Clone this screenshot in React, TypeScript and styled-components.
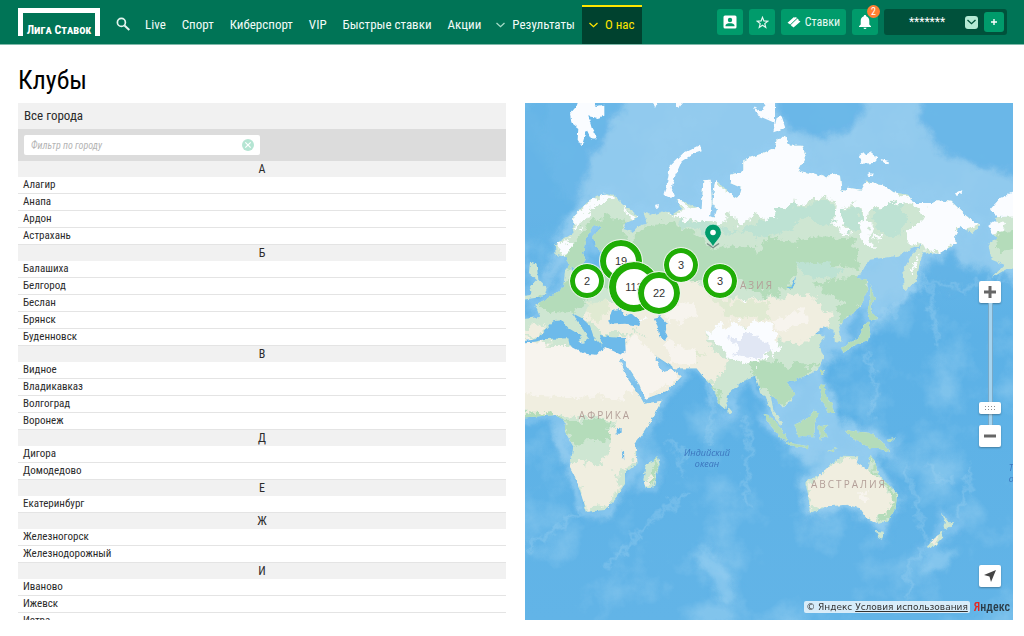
import React, { useState } from "react";
import styled, { createGlobalStyle, css } from "styled-components";

const GlobalStyle = createGlobalStyle`
  *, *::before, *::after { box-sizing: border-box; }
  body {
    margin: 0;
    background: #fff;
    color: #2b2b2b;
    font-family: "Roboto Condensed", "Liberation Sans Narrow", Roboto, sans-serif;
    font-size: 13px;
  }
  button, input { font-family: inherit; }
  button { cursor: pointer; }
`;

const Page = styled.div`
  height: 100vh;
  display: flex;
  flex-direction: column;
`;

/* ---------- header ---------- */

const Header = styled.header`
  flex: none;
  height: 45px;
  display: flex;
  align-items: stretch;
  padding: 0 17px 0 18px;
  background: #007456;
  border-bottom: 1px solid #7fb9aa;
`;

const LogoLink = styled.a`
  align-self: center;
  height: 28px;
  margin-right: 14px;
  svg { display: block; }
`;

const SearchButton = styled.button`
  width: 18px;
  padding: 4px 0 0;
  margin-right: 5px;
  border: 0;
  background: none;
  color: #e6f6f0;
  svg { display: block; margin: auto; }
`;

const Nav = styled.nav`
  display: flex;
  flex: 1;
  align-items: stretch;
`;

const NavLink = styled.a<{ $active?: boolean; $menu?: boolean }>`
  display: flex;
  align-items: center;
  gap: 7px;
  margin-top: 5px;
  padding: 0 ${(p) => (p.$menu ? 7 : 8)}px 2px;
  border-top: 2px solid transparent;
  color: #f2fbf8;
  font-size: 13px;
  font-weight: 400;
  line-height: 16px;
  white-space: nowrap;
  text-decoration: none;
  svg { color: #a5dcc8; }
  ${(p) =>
    p.$active &&
    css`
      background: #00422f;
      border-top-color: #ffe600;
      color: #ffe600;
      svg { color: #ffe600; }
    `}
`;

const Tools = styled.div`
  display: flex;
  align-items: flex-start;
  gap: 6px;
  padding-top: 9px;
`;

const Tool = styled.button<{ $wide?: boolean }>`
  position: relative;
  display: flex;
  align-items: center;
  justify-content: center;
  gap: 4px;
  width: ${(p) => (p.$wide ? 65 : 26)}px;
  height: 26px;
  padding: 0;
  border: 0;
  border-radius: 3px;
  background: #009b6b;
  color: #e8f8f2;
  font-size: 12px;
`;

const Badge = styled.span`
  position: absolute;
  top: -4px;
  right: -2px;
  width: 13px;
  height: 13px;
  border-radius: 50%;
  background: #ff7f32;
  color: #fff;
  font-size: 10px;
  line-height: 13px;
  text-align: center;
`;

const Balance = styled.div`
  display: flex;
  align-items: center;
  gap: 6px;
  width: 123px;
  height: 26px;
  padding: 3px;
  border-radius: 3px;
  background: #00513b;
  color: #fff;
`;

const Amount = styled.span`
  flex: 1;
  padding-left: 8px;
  font-size: 12px;
  line-height: 16px;
  text-align: center;
`;

const MiniButton = styled.button<{ $light?: boolean }>`
  display: flex;
  align-items: center;
  justify-content: center;
  width: ${(p) => (p.$light ? 13 : 20)}px;
  height: ${(p) => (p.$light ? 13 : 20)}px;
  padding: 0;
  border: 0;
  border-radius: 3px;
  background: ${(p) => (p.$light ? "#b5ead5" : "#009b6b")};
  color: ${(p) => (p.$light ? "#00513b" : "#fff")};
`;

/* ---------- city list ---------- */

const Main = styled.main`
  flex: 1;
  min-height: 0;
  display: flex;
  flex-direction: column;
  padding: 20px 11px 16px 18px;
`;

const Title = styled.h1`
  margin: 0 0 8px;
  color: #000;
  font-size: 26px;
  line-height: 30px;
  font-weight: 400;
`;

const Columns = styled.div`
  flex: 1;
  min-height: 0;
  display: grid;
  grid-template-columns: 1fr 1fr;
  gap: 19px;
`;

const Cities = styled.section`
  min-height: 0;
  overflow-y: auto;
  scrollbar-width: none;
`;

const CitiesTitle = styled.h2`
  margin: 0;
  padding: 0 6px;
  background: #f1f1f1;
  font-size: 13px;
  line-height: 26px;
  font-weight: 400;
`;

const Filter = styled.form`
  padding: 6px;
  background: #dcdcdc;
`;

const FilterField = styled.div`
  display: flex;
  align-items: center;
  width: 236px;
  height: 20px;
  padding: 0 6px 0 7px;
  border-radius: 2px;
  background: #fff;
`;

const FilterInput = styled.input`
  flex: 1;
  min-width: 0;
  padding: 0;
  border: 0;
  outline: 0;
  background: none;
  font-size: 10px;
  color: #2b2b2b;
  &::placeholder { color: #b4b4b4; font-style: italic; }
`;

const ClearButton = styled.button`
  padding: 0;
  border: 0;
  background: none;
  svg { display: block; }
`;

const Letter = styled.h3`
  margin: 0;
  background: #f1f1f1;
  font-size: 12px;
  line-height: 16px;
  font-weight: 400;
  text-align: center;
`;

const CityList = styled.ul`
  margin: 0;
  padding: 0;
  list-style: none;
`;

const City = styled.li`
  padding: 0 5px;
  border-bottom: 1px solid #e4e4e4;
  font-size: 11px;
  line-height: 16px;
  a { color: inherit; text-decoration: none; }
`;

/* ---------- map ---------- */

const MapBox = styled.section`
  position: relative;
  min-height: 0;
  overflow: hidden;
  background: #62b3e6;
`;

const Terrain = styled.svg`
  display: block;
  width: 100%;
  height: 100%;
`;

const Place = styled.span<{ $x: number; $y: number }>`
  position: absolute;
  left: ${(p) => (p.$x / 488) * 100}%;
  top: ${(p) => (p.$y / 517) * 100}%;
  transform: translate(-50%, -50%);
`;

const Continent = styled(Place)`
  color: #b39f98;
  font: 10px/12px "Open Sans", sans-serif;
  letter-spacing: 2px;
`;

const Ocean = styled(Place)`
  color: #3b74bd;
  font: italic 9px/11px "Open Sans", sans-serif;
  text-align: center;
  white-space: nowrap;
`;

const Cluster = styled.button<{ $size: number }>`
  display: block;
  width: ${(p) => p.$size}px;
  height: ${(p) => p.$size}px;
  padding: 0;
  border: ${(p) => (p.$size > 45 ? 7 : p.$size > 40 ? 6 : 5)}px solid #1fad05;
  border-radius: 50%;
  outline: 1px solid #e9f5e6;
  background: #fff;
  color: #333;
  font: 11px/12px "Liberation Sans", sans-serif;
`;

const ZoomControl = styled.div`
  position: absolute;
  top: 178px;
  right: 12px;
  display: flex;
  flex-direction: column;
  align-items: center;
`;

const MapButton = styled.button`
  display: flex;
  align-items: center;
  justify-content: center;
  width: 22px;
  height: 22px;
  padding: 0;
  border: 0;
  border-radius: 2px;
  background: #fff;
  box-shadow: 0 1px 2px rgba(0, 0, 0, 0.3);
  color: #666;
`;

const gripDots = [6, 9, 12, 15]
  .flatMap((x) => [4, 7].map((y) => `linear-gradient(#8c8c8c, #8c8c8c) ${x}px ${y}px / 1px 1px no-repeat`))
  .join(", ");

const ZoomRange = styled.input`
  appearance: none;
  writing-mode: vertical-lr;
  direction: rtl;
  width: 22px;
  height: 122px;
  margin: 0;
  background: linear-gradient(90deg, transparent 9px, #7aa9c6 9px, #7aa9c6 10px, #a5d4f0 10px, #a5d4f0 13px, #7aa9c6 13px, #7aa9c6 14px, transparent 14px);
  &::-webkit-slider-thumb {
    appearance: none;
    width: 22px;
    height: 12px;
    border-radius: 2px;
    background: ${gripDots}, #fff;
    box-shadow: 0 1px 2px rgba(0, 0, 0, 0.3);
  }
`;

const Locate = styled(MapButton)`
  position: absolute;
  right: 12px;
  bottom: 33px;
`;

const Credits = styled.div`
  position: absolute;
  right: 3px;
  bottom: 7px;
  display: flex;
  align-items: center;
  gap: 4px;
`;

const Copyright = styled.span`
  padding: 0 2px;
  border-radius: 2px;
  background: rgba(255, 255, 255, 0.75);
  color: #333;
  font: 9px/12px "DejaVu Sans", sans-serif;
  a { color: inherit; }
`;

const YandexLink = styled.a`
  color: #2b3c48;
  font: 500 12px/12px "Roboto Condensed", "Liberation Sans Narrow", sans-serif;
  text-decoration: none;
  span { color: #e52620; }
`;

const LogoText = styled.text`
  fill: #fff;
  font: small-caps 700 12px "Roboto Condensed", "Liberation Sans Narrow", sans-serif;
`;

const Chevron = () => (
  <svg width="9" height="6" viewBox="0 0 9 6" fill="none" stroke="currentColor" strokeWidth="1.3" aria-hidden="true">
    <path d="M.5 1 4.500 4.700 8.500 1" />
  </svg>
);

const Logo = () => (
  <svg width="82" height="28" viewBox="0 0 82 28" aria-hidden="true">
    <path d="M0 28V0H82V28H77V5H5V28Z" fill="#fff" />
    <LogoText x="41" y="26" textAnchor="middle">
      Лига Ставок
    </LogoText>
  </svg>
);

const groups = [
  { letter: "А", cities: ["Алагир", "Анапа", "Ардон", "Астрахань"] },
  { letter: "Б", cities: ["Балашиха", "Белгород", "Беслан", "Брянск", "Буденновск"] },
  { letter: "В", cities: ["Видное", "Владикавказ", "Волгоград", "Воронеж"] },
  { letter: "Д", cities: ["Дигора", "Домодедово"] },
  { letter: "Е", cities: ["Екатеринбург"] },
  { letter: "Ж", cities: ["Железногорск", "Железнодорожный"] },
  { letter: "И", cities: ["Иваново", "Ижевск", "Истра"] },
];

const links = ["Live", "Спорт", "Киберспорт", "VIP", "Быстрые ставки", "Акции"];

const clusters = [
  { x: 96, y: 158, size: 42, label: "19" },
  { x: 62, y: 178, size: 34, label: "2" },
  { x: 109, y: 184, size: 50, label: "113" },
  { x: 134, y: 190, size: 42, label: "22" },
  { x: 156, y: 162, size: 34, label: "3" },
  { x: 195, y: 178, size: 34, label: "3" },
];

/* Coastlines, three drawing units to one map pixel. */
const mainland =
  "M215 278 240 272 270 280 300 308 340 338 325 350 300 362 296 378 325 388 345 366 365 363 356 328 385 335 425 322 440 335 468 318 455 288 500 305 530 320 535 232 557 230 560 300 555 340 568 345 576 320 562 300 570 235 590 245 605 262 628 285 645 275 650 255 615 240 615 215 655 205 655 172 715 150 750 135 755 110 780 98 795 128 830 128 842 160 820 205 870 212 905 226 920 210 945 218 950 270 968 254 1010 260 1025 232 1085 252 1105 268 1150 275 1165 300 1220 300 1235 292 1280 296 1325 340 1365 365 1340 393 1305 368 1290 395 1292 422 1240 452 1195 448 1182 490 1175 535 1138 565 1132 505 1165 450 1190 425 1155 440 1120 458 1035 470 997 525 1025 530 1030 560 1000 620 950 655 940 680 950 712 930 720 925 680 895 670 870 690 900 698 883 725 895 760 885 790 860 811 810 831 785 836 811 876 775 916 755 891 738 880 745 921 775 961 765 968 735 920 722 880 705 871 700 846 690 821 650 836 612 871 600 919 585 906 560 846 535 821 515 796 450 796 430 783 395 760 390 770 415 808 440 800 470 820 430 862 360 888 340 840 290 765 283 770 310 830 340 872 358 903 410 893 370 966 330 1021 338 1081 300 1111 300 1146 275 1181 240 1221 185 1226 155 1131 135 1091 145 1031 120 986 118 951 90 936 -40 946 -40 652 45 642 30 605 60 590 90 572 115 550 120 505 138 482 143 525 200 532 225 505 235 465 290 448 235 452 210 430 205 400 230 372 205 366 182 408 174 450 182 470 158 505 130 482 122 462 92 455 90 425 145 390 145 340 185 300Z";

const waters = [
  "M-40 720 35 708 62 680 85 655 112 652 130 675 155 690 172 705 160 720 178 722 185 695 150 645 145 632 170 645 195 668 207 705 230 728 225 695 250 702 300 705 302 745 288 755 240 732 215 755 180 752 135 728 130 706 60 708 30 716Z",
  "M250 650 262 620 290 618 300 640 320 632 345 655 340 668 300 662 255 665Z",
  "M385 645 405 640 425 660 418 685 428 700 420 710 402 700 398 670Z",
  "M785 555 800 550 812 520 810 545 795 560Z",
  "M275 976 290 974 290 992 275 992Z",
  "M290 1043 297 1046 298 1072 293 1065Z",
];

const islands = [
  "M-40 585 20 575 15 550 35 530 12 510 15 478 35 485 40 530 65 555 60 575 30 585 -40 595Z",
  "M114 665 124 665 122 690 114 690Z M150 708 178 705 170 720Z",
  "M608 910 622 926 612 934Z",
  "M398 1060 404 1080 385 1155 362 1155 355 1130 362 1085 385 1075Z",
  "M1035 545 1045 575 1052 590 1040 600 1040 630 1060 645 1035 650 1028 625 1036 580Z",
  "M1030 655 1035 680 1028 715 990 725 955 750 950 735 1000 705 1015 670Z",
  "M735 940 775 985 790 1015 770 1010 735 965 715 935Z M785 1018 850 1030 850 1036 790 1026Z",
  "M808 965 850 945 868 920 880 935 870 960 868 1000 820 1000Z",
  "M885 800 900 802 895 815 890 812Z M885 845 900 845 900 880 918 900 930 930 910 930 890 890Z",
  "M880 970 910 965 895 980 910 1005 895 1000 888 1015Z M905 1045 935 1035 925 1045Z",
  "M960 980 985 985 1040 990 1070 1015 1095 1048 1060 1035 1035 1035 1000 1015 975 1000Z M1085 1010 1110 1005 1090 1022Z",
  "M1037 1055 1050 1075 1060 1115 1095 1150 1117 1170 1112 1215 1090 1255 1060 1262 1030 1250 1005 1215 965 1205 905 1210 855 1230 850 1180 840 1135 880 1120 915 1085 950 1058 1000 1060 995 1080 1025 1100Z",
  "M1053 1284 1080 1286 1070 1310 1060 1305Z",
  "M1250 1228 1270 1258 1288 1258 1265 1280 1255 1275 1260 1255Z M1255 1285 1250 1305 1220 1338 1205 1332 1235 1300Z",
  "M1410 345 1445 340 1504 330 1504 490 1440 500 1400 525 1438 485 1400 470 1390 425 1415 405 1400 385 1420 370Z",
];

const snowIslands = [
  "M135 32 150 15 165 -30 195 -30 215 12 238 8 238 38 218 45 190 40 200 75 218 108 200 110 185 80 170 130 158 110 160 75 140 60Z",
  "M415 275 425 245 435 190 475 150 525 125 530 145 500 155 470 175 448 225 440 255 450 280 430 282Z",
  "M375 -20 405 -20 390 12Z M440 -20 485 -20 460 15Z M685 10 710 25 730 -20 750 -10 750 60 700 38Z",
  "M735 15 748 28 745 55 732 50Z M755 45 770 40 782 75 745 88Z",
  "M1002 160 1015 148 1022 155 1035 148 1058 165 1045 180 1010 182Z M1067 168 1095 175 1090 184 1072 178Z M1028 210 1045 212 1045 220 1028 218Z M1290 268 1312 262 1310 270 1295 276Z",
  "M390 310 402 306 400 316 392 318Z",
  "M1390 365 1405 355 1440 360 1432 385 1400 392Z M1395 320 1425 285 1504 250 1504 340 1420 342Z",
];

const snow = [
  "M95 430 145 410 145 430 110 460 95 450Z M145 340 185 300 240 270 270 282 240 295 215 300 190 330 165 370 150 385Z M295 308 338 338 325 348 300 325Z",
  "M430 335 470 320 455 285 530 320 530 225 560 225 620 280 610 210 750 90 860 90 860 200 960 200 970 240 1090 240 1170 290 1280 285 1380 370 1300 380 1295 425 1235 455 1190 430 1140 420 1150 375 1200 350 1190 310 1120 300 1050 310 1020 345 1040 390 1080 405 1070 415 1030 385 1050 435 1020 430 1005 365 1010 330 990 295 960 320 950 370 985 400 960 395 925 350 930 290 860 290 790 310 730 350 690 335 650 365 620 335 585 355 550 365 500 350 480 345Z",
  "M540 680 580 675 620 655 660 670 690 650 740 665 760 720 755 770 735 745 690 790 630 775 590 735 550 710Z",
  "M1155 500 1195 448 1185 465 1160 515Z M650 590 665 588 660 600Z M340 645 360 650 350 655Z",
];

const sea = {
  pale: [
    "M70 -60 1524 -60 1524 560 1230 440 1180 560 1010 600 900 440 330 380 230 380 150 400 90 520 40 580 90 440 150 320 90 240 60 120Z",
    "M1130 550 1190 470 1170 560 1080 650 1040 680 1020 640 880 820 860 820 880 700 1000 530 1120 450Z",
    "M740 870 900 800 930 890 940 960 1050 980 1110 1040 1050 1060 1000 1060 850 1080 730 960Z",
    "M80 945 130 980 160 1150 190 1250 245 1225 310 1150 345 1070 340 1010 330 1080 300 1180 240 1250 190 1245 150 1170 130 1100Z",
    "M820 1140 930 1050 1040 1040 1130 1180 1090 1290 1050 1280 970 1220 850 1250Z",
  ],
  deep: [
    "M-60 60 60 -60 330 -60 240 90 190 200 180 270 100 360 -60 450Z",
    "M735 -60 1040 -60 1000 45 960 90 900 105 830 100 770 60Z M1180 -60 1524 -60 1524 240 1390 195 1290 170 1200 100Z",
    "M1200 460 1290 440 1330 520 1420 550 1280 570 1210 530Z M960 665 1020 590 1030 650 990 700Z",
  ],
};

const forests = [
  "M110 470 180 370 240 340 290 350 310 420 360 370 440 360 520 400 560 440 620 430 700 440 730 400 800 420 870 400 980 410 1010 500 900 480 820 500 790 560 720 580 650 540 560 520 420 540 330 530 230 560 150 630 60 620 30 590 80 560 160 520Z",
  "M870 540 960 520 1010 525 1030 560 1000 620 950 655 930 650 960 600 900 570Z",
  "M660 770 750 780 830 790 890 780 860 811 810 831 811 876 775 916 738 880 690 820Z",
  "M118 951 250 950 262 1000 250 1010 150 1020 120 986Z M-60 925 90 930 118 951 -60 960Z",
  "M1037 1055 1060 1115 1117 1170 1112 1215 1090 1255 1060 1262 1080 1200 1100 1170 1040 1100Z",
  "M560 830 600 919 590 910 555 845Z M404 1060 385 1155 375 1155 385 1080Z M1400 400 1504 370 1504 440 1430 450Z",
];

const teal = [
  "M470 345 560 370 650 380 740 340 800 310 920 300 925 355 890 370 860 340 820 350 800 380 740 400 700 400 620 385 540 390 470 370Z",
  "M965 320 1000 300 1005 370 970 390 952 350Z M1060 310 1130 300 1150 350 1120 400 1060 390 1040 350Z M1230 390 1245 380 1240 435 1200 440Z",
  "M820 480 900 475 950 500 930 525 840 520Z M480 670 540 730 500 745 460 700Z M150 340 200 310 170 360Z",
];

const steppe = [
  "M330 560 380 530 510 525 550 560 640 590 740 580 870 580 890 620 920 630 900 680 820 720 760 715 700 660 540 680 550 740 620 770 560 850 530 830 450 800 360 690 230 690 170 640Z",
  "M-60 705 220 735 340 690 540 750 515 800 470 850 410 900 340 1060 300 1110 230 1100 270 950 -60 920Z",
  "M130 1080 180 1080 260 1090 280 1120 270 1190 190 1230Z",
  "M850 1140 930 1080 1000 1065 1040 1100 1080 1160 1100 1190 1080 1240 1030 1250 960 1205 855 1220Z M355 1120 380 1115 375 1152 355 1155Z",
  "M1250 1290 1235 1310 1215 1330 1225 1305Z M10 670 60 660 50 700 -60 705Z",
];

const grassland = [
  "M560 585 640 600 720 590 740 620 735 650 690 640 640 650 600 640Z",
  "M190 600 250 590 250 650 190 650Z M470 740 540 745 520 770 480 765Z",
];

const sand = [
  "M-60 720 130 720 240 735 340 700 400 770 470 820 350 888 330 850 300 890 -60 870Z",
  "M380 610 500 600 520 640 440 660Z M740 650 840 620 850 660 760 690Z",
  "M420 710 520 750 500 790 440 780Z M1000 1165 1030 1175 1020 1195 1000 1185Z",
];

const ridges = [
  "M1195 520Q1300 590 1440 520",
  "M1040 660Q1130 610 1180 550",
  "M550 830Q570 930 550 1020",
  "M670 940 665 1210",
  "M420 1010Q500 1040 465 1120",
  "M0 1340Q90 1280 170 1220",
  "M240 1400Q330 1280 490 1170",
  "M1150 1100 1180 1230 1210 1330",
  "M1210 1075Q1240 1180 1290 1110",
  "M1330 1080Q1350 1150 1290 1240",
  "M1150 1480Q1130 1390 1200 1330",
  "M1020 750Q1080 850 1030 940",
  "M1210 540 1240 730",
];

function WorldMap() {
  const paths = (list: string[], fill: string, opacity = 1) =>
    list.map((d) => <path key={d} d={d} fill={fill} opacity={opacity} />);
  return (
    <Terrain viewBox="0 0 1464 1551" preserveAspectRatio="xMidYMid slice" aria-hidden="true">
      <defs>
        <filter id="coast" x="-5%" y="-5%" width="110%" height="110%">
          <feTurbulence type="fractalNoise" baseFrequency="0.07" numOctaves="3" seed="4" />
          <feDisplacementMap in="SourceGraphic" scale="12" xChannelSelector="R" yChannelSelector="G" />
        </filter>
        <filter id="biome" x="-5%" y="-5%" width="110%" height="110%">
          <feTurbulence type="fractalNoise" baseFrequency="0.035" numOctaves="4" seed="9" />
          <feDisplacementMap in="SourceGraphic" scale="50" xChannelSelector="R" yChannelSelector="G" />
        </filter>
        <filter id="shelf" x="-10%" y="-10%" width="120%" height="120%">
          <feGaussianBlur in="SourceGraphic" stdDeviation="9" result="soft" />
          <feTurbulence type="fractalNoise" baseFrequency="0.015" numOctaves="4" seed="2" />
          <feDisplacementMap in="soft" scale="60" xChannelSelector="R" yChannelSelector="G" />
        </filter>
        <filter id="ridge" filterUnits="userSpaceOnUse" x="0" y="0" width="1464" height="1551">
          <feGaussianBlur in="SourceGraphic" stdDeviation="4" result="soft" />
          <feTurbulence type="fractalNoise" baseFrequency="0.03" numOctaves="4" seed="7" />
          <feDisplacementMap in="soft" scale="60" xChannelSelector="R" yChannelSelector="G" />
        </filter>
        <filter id="seabed" filterUnits="userSpaceOnUse" x="0" y="0" width="1464" height="1551">
          <feTurbulence type="fractalNoise" baseFrequency="0.006" numOctaves="6" seed="12" />
          <feColorMatrix values="0 0 0 0 0.6  0 0 0 0 0.82  0 0 0 0 0.95  3 0 0 0 -1.45" />
        </filter>
        <linearGradient id="water" x1="0" y1="0" x2="0" y2="1">
          <stop offset="0" stopColor="#74bce9" />
          <stop offset="0.45" stopColor="#5cb1e6" />
          <stop offset="1" stopColor="#62b4e7" />
        </linearGradient>
        <clipPath id="land">
          <path d={mainland} />
          {islands.map((d) => (
            <path key={d} d={d} />
          ))}
        </clipPath>
      </defs>
      <rect width="1464" height="1551" fill="url(#water)" />
      <rect width="1464" height="1551" filter="url(#seabed)" opacity="0.3" />
      <g filter="url(#shelf)">
        {paths(sea.pale, "#97ccef", 0.85)}
        {paths(sea.deep, "#62b3e6", 0.8)}
        <path d={mainland} fill="none" stroke="#95cdf1" strokeWidth="24" opacity="0.7" />
        {islands.map((d) => (
          <path key={d} d={d} fill="none" stroke="#95cdf1" strokeWidth="20" opacity="0.6" />
        ))}
        <path d="M500 1340 540 1330 600 1400 640 1480 600 1500 550 1420Z M1200 1350 1300 1340 1260 1400 1190 1430Z" fill="#9bd0f1" opacity="0.6" />
      </g>
      <g filter="url(#ridge)" fill="none" stroke="#a5d5f3" strokeWidth="12" opacity="0.35">
        {ridges.map((d) => (
          <path key={d} d={d} />
        ))}
      </g>
      <g filter="url(#coast)">
        <g clipPath="url(#land)">
          <rect x="-60" y="-60" width="1584" height="1671" fill="#cee6d2" />
          <g filter="url(#biome)">
            {paths(forests, "#b4dcba")}
            {paths(teal, "#bde2d3")}
            {paths(steppe, "#f0eee0")}
            {paths(grassland, "#e0ead2")}
            {paths(sand, "#f7f4ee")}
            {paths(snow, "#fafcff")}
            <path d="M620 710 660 690 740 730 735 750 690 765 640 755Z" fill="#e1e7f4" />
          </g>
          <g fill="#b4dcba">{islands.slice(4, 11).map((d) => <path key={d} d={d} />)}</g>
        </g>
        {paths(waters, "#6dbaea")}
        <path d="M150 655 190 705 178 715 135 660Z" fill="#cee6d2" />
        {paths(snowIslands, "#fafcff")}
      </g>
    </Terrain>
  );
}

export default function App() {
  const [city, setCity] = useState("");
  const [zoom, setZoom] = useState(10);
  const needle = city.trim().toLowerCase();

  return (
    <Page>
      <GlobalStyle />
      <Header>
        <LogoLink href="#" aria-label="Лига Ставок">
          <Logo />
        </LogoLink>
        <SearchButton aria-label="Поиск">
          <svg width="14" height="14" viewBox="0 0 14 14" fill="none" stroke="currentColor" aria-hidden="true">
            <circle cx="5.400" cy="5.400" r="4" strokeWidth="1.700" />
            <path d="m8.500 8.500 4.800 4.500" strokeWidth="2" />
          </svg>
        </SearchButton>
        <Nav>
          {links.map((label) => (
            <NavLink href="#" key={label}>
              {label}
            </NavLink>
          ))}
          <NavLink href="#" $menu>
            <Chevron />
            Результаты
          </NavLink>
          <NavLink href="#" $menu $active>
            <Chevron />О нас
          </NavLink>
        </Nav>
        <Tools>
          <Tool aria-label="Профиль">
            <svg width="14" height="14" viewBox="0 0 14 14" aria-hidden="true">
              <rect x=".5" y=".5" width="13" height="13" rx="1.500" fill="#fff" />
              <circle cx="7" cy="5" r="2.200" fill="#009b6b" />
              <path d="M2.500 11.200V10.500C2.500 8.800 5 8.200 7 8.200S11.500 8.800 11.500 10.500V11.200Z" fill="#009b6b" />
            </svg>
          </Tool>
          <Tool aria-label="Избранное">
            <svg width="13" height="13" viewBox="0 0 24 24" fill="none" stroke="currentColor" strokeWidth="2.200" aria-hidden="true">
              <path d="m12 2.500 2.600 6.600 7.100.5-5.500 4.500 1.800 6.900-6-3.900-6 3.900 1.800-6.900L2.300 9.600l7.100-.5Z" />
            </svg>
          </Tool>
          <Tool $wide>
            <svg width="14" height="12" viewBox="0 0 14 12" aria-hidden="true">
              <path d="M.5 6.800 7 1 7.900 1.700 8.800 1 10 2 3.200 8.600Z" fill="#fff" />
              <path d="M3.700 9 10.500 2.600 11.600 3.400 11.400 4.200 13.500 5.500 6.500 11.500 5.800 10.700 5 10.600Z" fill="#fff" />
            </svg>
            Ставки
          </Tool>
          <Tool aria-label="Уведомления: 2">
            <svg width="14" height="16" viewBox="0 0 14 16" fill="#fff" aria-hidden="true">
              <path d="M7 1C7.800 1 8.200 1.500 8.200 2.300 10.300 2.900 11.300 4.700 11.300 7V10.500L13 12.300V13H1V12.300L2.700 10.500V7C2.700 4.700 3.700 2.900 5.800 2.300 5.800 1.500 6.200 1 7 1Z M5.500 13.700H8.500C8.500 15.500 5.500 15.500 5.500 13.700Z" />
            </svg>
            <Badge>2</Badge>
          </Tool>
          <Balance>
            <Amount>*******</Amount>
            <MiniButton $light aria-label="Показать баланс">
              <Chevron />
            </MiniButton>
            <MiniButton aria-label="Пополнить">
              <svg width="6" height="6" viewBox="0 0 6 6" stroke="currentColor" strokeWidth="1.400" aria-hidden="true">
                <path d="M3 0V6M0 3H6" />
              </svg>
            </MiniButton>
          </Balance>
        </Tools>
      </Header>

      <Main>
        <Title>Клубы</Title>
        <Columns>
          <Cities>
            <CitiesTitle>Все города</CitiesTitle>
            <Filter onSubmit={(e) => e.preventDefault()}>
              <FilterField>
                <FilterInput
                  type="text"
                  aria-label="Фильтр по городу"
                  placeholder="Фильтр по городу"
                  value={city}
                  onChange={(e) => setCity(e.target.value)}
                />
                <ClearButton type="button" aria-label="Очистить" onClick={() => setCity("")}>
                  <svg width="12" height="12" viewBox="0 0 12 12" aria-hidden="true">
                    <circle cx="6" cy="6" r="6" fill="#b5e5d3" />
                    <path d="m3.300 3.300 5.400 5.400M8.700 3.300 3.300 8.700" stroke="#fff" strokeWidth="1.200" />
                  </svg>
                </ClearButton>
              </FilterField>
            </Filter>
            {groups.map(({ letter, cities }) => {
              const shown = cities.filter((name) => name.toLowerCase().includes(needle));
              if (!shown.length) return null;
              return (
                <React.Fragment key={letter}>
                  <Letter>{letter}</Letter>
                  <CityList>
                    {shown.map((name) => (
                      <City key={name}>
                        <a href="#">{name}</a>
                      </City>
                    ))}
                  </CityList>
                </React.Fragment>
              );
            })}
          </Cities>

          <MapBox aria-label="Карта клубов">
            <WorldMap />
            <Continent $x={232} $y={182}>АЗИЯ</Continent>
            <Continent $x={80} $y={312}>АФРИКА</Continent>
            <Continent $x={324} $y={381}>АВСТРАЛИЯ</Continent>
            <Ocean $x={182} $y={355}>
              Индийский
              <br />
              океан
            </Ocean>
            <Ocean $x={496} $y={370}>
              Тихий
              <br />
              океан
            </Ocean>
            {clusters.map((c) => (
              <Place key={`${c.x}-${c.y}`} $x={c.x} $y={c.y}>
                <Cluster $size={c.size}>{c.label}</Cluster>
              </Place>
            ))}
            <Place $x={188} $y={135}>
              <svg width="18" height="26" viewBox="0 0 18 26" aria-label="Клуб" role="img">
                <path d="m3 20 6 4 6-4" fill="none" stroke="#7d8f88" strokeWidth="1.500" />
                <path d="M9 23.500C7 18 .7 14.500 .7 9A8.300 8.300 0 0 1 17.300 9C17.300 14.500 11 18 9 23.500Z" fill="#009b6b" stroke="#e3f2ec" strokeWidth=".6" />
                <circle cx="9" cy="9" r="2.800" fill="#fff" />
              </svg>
            </Place>
            <ZoomControl>
              <MapButton aria-label="Приблизить" onClick={() => setZoom((z) => Math.min(100, z + 10))}>
                <svg width="12" height="12" viewBox="0 0 12 12" stroke="currentColor" strokeWidth="3" aria-hidden="true">
                  <path d="M6 0V12M0 6H12" />
                </svg>
              </MapButton>
              <ZoomRange
                type="range"
                aria-label="Масштаб"
                min={0}
                max={100}
                value={zoom}
                onChange={(e) => setZoom(Number(e.target.value))}
              />
              <MapButton aria-label="Отдалить" onClick={() => setZoom((z) => Math.max(0, z - 10))}>
                <svg width="12" height="12" viewBox="0 0 12 12" stroke="currentColor" strokeWidth="3" aria-hidden="true">
                  <path d="M0 6H12" />
                </svg>
              </MapButton>
            </ZoomControl>
            <Locate aria-label="Моё местоположение">
              <svg width="14" height="14" viewBox="0 0 14 14" aria-hidden="true">
                <path d="M13 1 8 13 6.500 7.500 1 6Z" fill="#444" />
              </svg>
            </Locate>
            <Credits>
              <Copyright>
                © Яндекс <a href="#">Условия использования</a>
              </Copyright>
              <YandexLink href="#">
                <span>Я</span>ндекс
              </YandexLink>
            </Credits>
          </MapBox>
        </Columns>
      </Main>
    </Page>
  );
}
